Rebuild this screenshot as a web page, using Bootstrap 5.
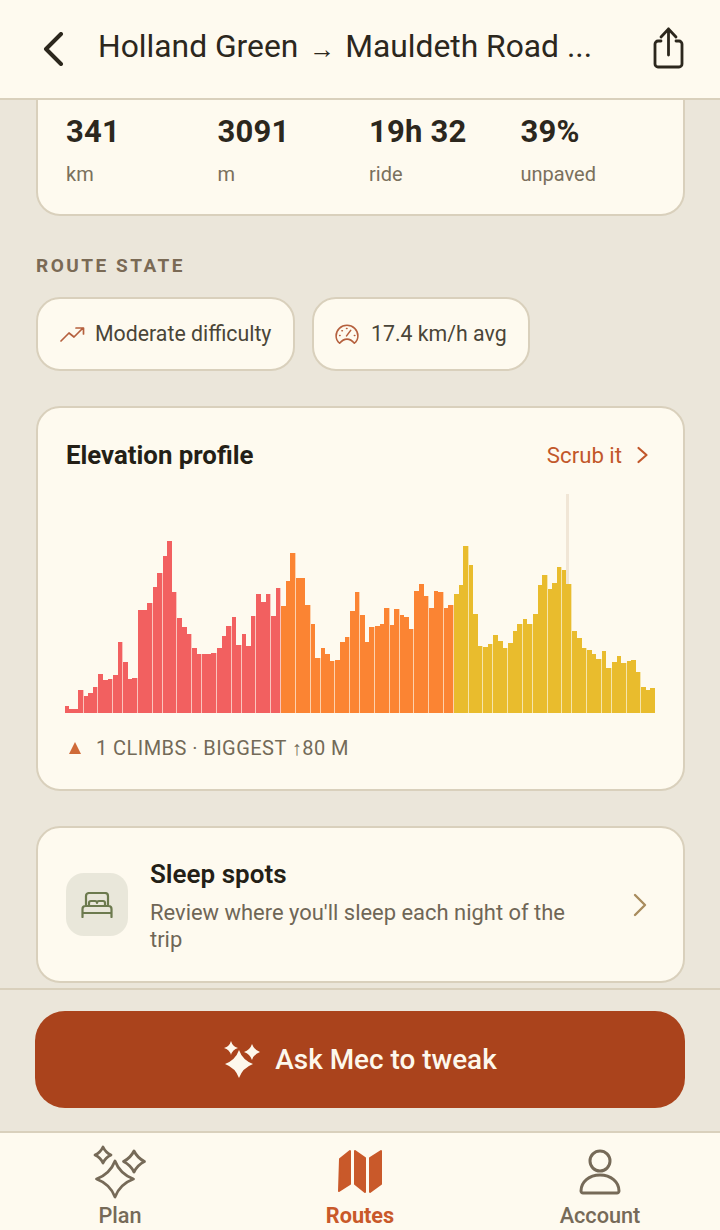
<!DOCTYPE html>
<html lang="en"><head><meta charset="utf-8"><title>Route</title>
<link href="https://cdn.jsdelivr.net/npm/bootstrap@5.3.0/dist/css/bootstrap.min.css" rel="stylesheet">
<style>
html,body{height:1230px;overflow:hidden}
body{font-family:Roboto,"Liberation Sans",sans-serif;background:#ebe6da;color:#2c271d;width:720px}
.app-shell{height:1230px}
.top-bar{height:100px;background:#fefaef;border-bottom:2px solid #d9d0bc;flex:none;z-index:2}
.back-btn{width:98px;padding-left:43px}
.route-title{font-size:31.8px;line-height:40px;width:531px;margin-top:-4px;white-space:nowrap}
.route-arrow{font-size:26px;margin:0 2px 0 3px;position:relative;top:1px}
.share-btn{margin-left:23px;margin-top:-3px}
.scroll-pane{flex:1;min-height:0}
.panel{background:#fefaef;border:2px solid #d9d0bc;border-radius:24px;margin:0 35px 0 36px}
.stat-panel{margin-top:-42px;height:158px;padding:0 11px 0 28px}
.stat-row{padding-top:54px}
.stat-num{font-size:31px;font-weight:700;line-height:36px;letter-spacing:.2px}
.stat-unit{font-size:20px;line-height:24px;color:#7a705c;margin-top:12px}
.section-label{font-size:19px;font-weight:700;letter-spacing:2.5px;color:#7a6a55;margin:38px 36px 0;line-height:24px}
.chip-row{margin:19px 36px 0;column-gap:17px}
.state-chip{height:74px;background:#fefaef;border:2px solid #d9d0bc;border-radius:24px;font-size:21.3px;color:#4a4538}
.chip-a{width:259px;padding-left:22px;gap:10px}
.chip-b{width:218px;padding-left:21px;gap:12px}
.elev-panel{margin-top:35px;height:385px;padding:0 28px 0 28px;position:relative}
.elev-head{height:91px;padding-top:2px}
.elev-title{font-size:25.8px;font-weight:700;line-height:32px;color:#241f16}
.scrub-link{font-size:22.2px;color:#c2572a;line-height:28px;gap:14px;padding-right:6px}
.bar-plot{height:214px;width:590px;margin-left:-1.5px;position:relative}
.plot-bar{flex:1 1 0}
.bar-split{border-right:1px solid rgba(254,250,239,.65)}
.tone-red{background:#f26060}
.tone-orange{background:#fb8433}
.tone-yellow{background:#e9bc2d}
.cursor-line{position:absolute;left:501px;top:-5px;width:3px;height:90px;background:#f1e6d6}
.climb-note{margin-top:23px;font-size:20px;line-height:24px;color:#736a58;letter-spacing:.45px;gap:15px}
.climb-tri{width:0;height:0;border-left:6.5px solid transparent;border-right:6.5px solid transparent;border-bottom:12px solid #cf6a38;margin-left:3px}
.sleep-panel{margin-top:35px;height:157px;padding-left:28px;padding-right:36px;gap:22px}
.bed-tile{width:62px;height:63px;background:#e9e7da;border-radius:18px;flex:none}
.sleep-title{font-size:26px;font-weight:600;line-height:32px;color:#241f16}
.sleep-desc{font-size:21.95px;line-height:27px;color:#6f6656;margin-top:9px}
.sleep-text{width:430px;margin-top:2px}
.action-dock{flex:none;height:145px;border-top:2px solid #d9d0bc;padding:21px 35px 0 35px;border-bottom:2px solid #d9d0bc;background:#ebe6da}
.ask-btn{height:97px;width:100%;background:#aa431c;border:0;border-radius:30px;color:#fdf8ec;font-size:27.9px;font-weight:500;gap:14px}
.ask-btn:hover{background:#aa431c;color:#fdf8ec}
.tab-bar{flex:none;height:97px;background:#fefaef}
.tab-item{width:240px;font-size:21.7px;font-weight:500;color:#766a58;line-height:26px;padding-top:11px}
.tab-icon{height:59px}
.map-glyph{margin-top:4px}
.user-glyph{margin-top:3px}
.tab-on{color:#c9592a;font-weight:700}
</style></head>
<body>
<div class="app-shell d-flex flex-column">
  <header class="top-bar d-flex align-items-center">
    <div class="back-btn">
      <svg class="d-block" width="22" height="34" viewBox="0 0 22 34" fill="none" stroke="#2c271d" stroke-width="4" stroke-linecap="round" stroke-linejoin="round"><path d="M18 2 3 17l15 15"/></svg>
    </div>
    <div class="route-title">Holland Green <span class="route-arrow">→</span> Mauldeth Road ...</div>
    <div class="share-btn">
      <svg class="d-block" width="32" height="42" viewBox="0 0 32 42" fill="none" stroke="#2c271d" stroke-width="2.8" stroke-linecap="round" stroke-linejoin="round"><path d="M9 14H6a3 3 0 0 0-3 3v20a3 3 0 0 0 3 3h21a3 3 0 0 0 3-3V17a3 3 0 0 0-3-3h-3"/><path d="M16.500 28V2M9 10l7.500-8 7.500 8"/></svg>
    </div>
  </header>

  <main class="scroll-pane overflow-hidden">
    <section class="panel stat-panel">
      <div class="row g-0 stat-row">
        <div class="col-3"><div class="stat-num">341</div><div class="stat-unit">km</div></div>
        <div class="col-3"><div class="stat-num">3091</div><div class="stat-unit">m</div></div>
        <div class="col-3"><div class="stat-num">19h 32</div><div class="stat-unit">ride</div></div>
        <div class="col-3"><div class="stat-num">39%</div><div class="stat-unit">unpaved</div></div>
      </div>
    </section>

    <div class="section-label text-uppercase">Route state</div>
    <div class="chip-row d-flex">
      <div class="state-chip chip-a d-flex align-items-center">
        <svg width="25" height="16" viewBox="0 0 25 16" fill="none" stroke="#b5603e" stroke-width="1.7" stroke-linecap="round" stroke-linejoin="round"><path d="M1 15l8-8 5 4 9-9M16 2h7.500v6"/></svg>
        <span>Moderate difficulty</span>
      </div>
      <div class="state-chip chip-b d-flex align-items-center">
        <svg width="24" height="21" viewBox="0 0 26 22" fill="none" stroke="#b5603e" stroke-width="1.7" stroke-linecap="round" stroke-linejoin="round"><path d="M5 20.500C2.600 18.500 1.200 15.500 1.200 12.500 1.200 6 6.500 1 13 1s11.800 5 11.800 11.500c0 3-1.400 6-3.800 8C18.500 17.500 16 16 13 16s-5.500 1.500-8 4.500Z"/><path d="M12.500 12.500 17 6.500"/><path d="M5 12h.5M7.500 7h.5M12.500 4.500h.5M21 12h.5"/></svg>
        <span>17.4 km/h avg</span>
      </div>
    </div>

    <section class="panel elev-panel">
      <div class="elev-head d-flex justify-content-between align-items-center">
        <div class="elev-title">Elevation profile</div>
        <div class="scrub-link d-flex align-items-center">
          <span>Scrub it</span>
          <svg width="13" height="18" viewBox="0 0 13 18" fill="none" stroke="#c2572a" stroke-width="2.200" stroke-linecap="round" stroke-linejoin="round"><path d="M2.500 2l8 7-8 7"/></svg>
        </div>
      </div>
      <div class="bar-plot d-flex align-items-end" id="plot"><div class="cursor-line"></div></div>
      <div class="climb-note d-flex align-items-center text-uppercase">
        <span class="climb-tri"></span><span>1 climbs · biggest ↑80 m</span>
      </div>
    </section>

    <section class="panel sleep-panel d-flex align-items-center">
      <div class="bed-tile d-flex align-items-center justify-content-center">
        <svg width="32" height="26" viewBox="0 0 32 26" fill="none" stroke="#6c7a4e" stroke-width="2.200" stroke-linecap="round" stroke-linejoin="round"><path d="M1.500 25V17a3 3 0 0 1 3-3h23a3 3 0 0 1 3 3v8M1.500 21h29M5 14V4a3 3 0 0 1 3-3h16a3 3 0 0 1 3 3v10M8 14v-3a2 2 0 0 1 2-2h4a2 2 0 0 1 2 2 2 2 0 0 1 2-2h4a2 2 0 0 1 2 2v3"/></svg>
      </div>
      <div class="sleep-text">
        <div class="sleep-title">Sleep spots</div>
        <div class="sleep-desc">Review where you'll sleep each night of the trip</div>
      </div>
      <svg class="ms-auto" width="14" height="24" viewBox="0 0 14 24" fill="none" stroke="#a98c5e" stroke-width="2.400" stroke-linecap="round" stroke-linejoin="round"><path d="M2 2l10 10L2 22"/></svg>
    </section>
  </main>

  <div class="action-dock">
    <button class="btn ask-btn d-flex align-items-center justify-content-center" type="button">
      <svg width="38" height="38" viewBox="0 0 38 38" fill="#fdf8ec"><path d="M16 9Q19.500 19 30 23 19.500 27 16 37 12.500 27 2 23 12.500 19 16 9Z"/><path d="M8 0Q9.500 5.500 15 7 9.500 8.500 8 14 6.500 8.500 1 7 6.500 5.500 8 0Z"/><path d="M29 3Q31 9 37 11 31 13 29 19 27 13 21 11 27 9 29 3Z"/></svg>
      <span>Ask Mec to tweak</span>
    </button>
  </div>

  <nav class="tab-bar d-flex">
    <div class="tab-item text-center">
      <div class="tab-icon d-flex justify-content-center">
        <svg width="60" height="58" viewBox="0 0 60 58" fill="none" stroke="#766a58" stroke-width="2.800" stroke-linejoin="round"><path d="M25 17Q30 30 43.500 35 30 40 25 53 20 40 6.500 35 20 30 25 17Z"/><path d="M13 3Q15.500 8.500 21 11 15.500 13.500 13 19 10.500 13.500 5 11 10.500 8.500 13 3Z"/><path d="M44 7Q47.500 14 54.500 17.500 47.500 21 44 28 40.500 21 33.500 17.500 40.500 14 44 7Z"/></svg>
      </div>
      <div>Plan</div>
    </div>
    <div class="tab-item tab-on text-center">
      <div class="tab-icon d-flex justify-content-center">
        <svg class="map-glyph" width="46" height="46" viewBox="0 0 46 46" fill="#c9592a" stroke="#c9592a" stroke-width="2" stroke-linejoin="round"><path d="M3 11 13 3V36L2 43Z"/><path d="M18 3 28 10V44L18 36Z"/><path d="M33 10 44 3V36L33 44Z"/></svg>
      </div>
      <div>Routes</div>
    </div>
    <div class="tab-item text-center">
      <div class="tab-icon d-flex justify-content-center">
        <svg class="user-glyph" width="44" height="48" viewBox="0 0 44 48" fill="none" stroke="#766a58" stroke-width="3" stroke-linejoin="round"><circle cx="22" cy="14" r="10"/><path d="M3 44C3 35 11 28 22 28S41 35 41 44c0 1-1 2-2 2H5c-1 0-2-1-2-2Z"/></svg>
      </div>
      <div>Account</div>
    </div>
  </nav>
</div>
<script>
var tops=[675,685,683,628,645,637,618,580,598,595,582,484,542,595,590,388,386,366,318,275,224,180,332,410,438,460,500,520,518,518,517,500,466,436,408,492,458,496,404,340,364,338,404,322,
374,300,216,290,290,372,428,530,500,518,540,536,484,468,390,334,402,484,438,436,430,382,432,384,402,407,444,330,308,346,382,330,333,380,372,
338,312,194,252,398,494,497,490,462,480,500,486,450,430,414,430,400,312,282,325,307,258,268,308,450,470,502,507,518,534,510,560,544,524,546,540,536,574,617,626,622];
var splits=[4,7,10,12,15,18,20,23,26,28,31,34,36,39,42,44,47,50,52,55,58,60,63,66,68,71,74,77,79,82,85,87,90,93,95,98,101,103,106,109,111,114,117];
var plot=document.getElementById('plot');
tops.forEach(function(t,i){
  var b=document.createElement('div');
  b.className='plot-bar '+(i<44?'tone-red':i<79?'tone-orange':'tone-yellow')+(splits.indexOf(i+1)>=0?' bar-split':'');
  b.style.height=((696-t)/3).toFixed(1)+'px';
  plot.appendChild(b);
});
</script>
<script src="https://cdn.jsdelivr.net/npm/bootstrap@5.3.0/dist/js/bootstrap.bundle.min.js"></script>
</body></html>
